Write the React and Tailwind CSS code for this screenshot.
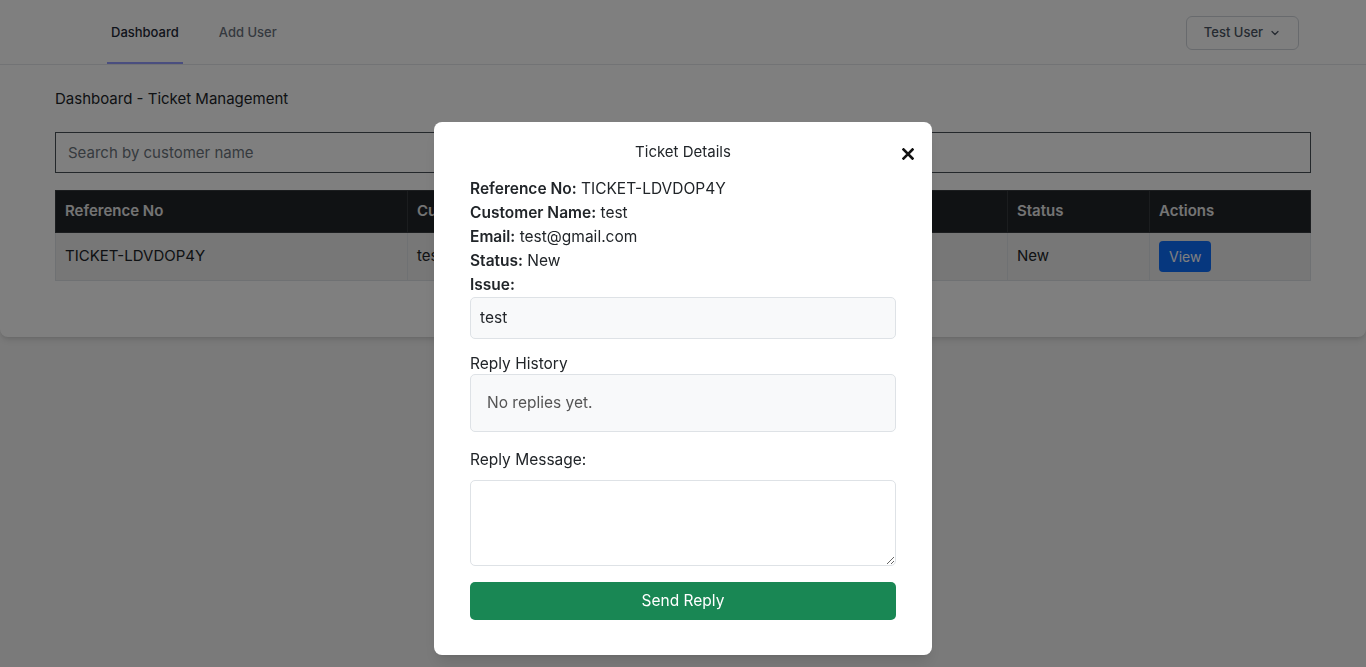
import React from "react";

function Chevron() {
  return (
    <svg width="12" height="12" viewBox="0 0 24 24" fill="none" stroke="currentColor" strokeWidth="2.5" strokeLinecap="round" strokeLinejoin="round">
      <path d="M6 9l6 6 6-6" />
    </svg>
  );
}

export default function App() {
  return (
    <div className="relative min-h-[667px] bg-[#f4f4f4] text-[#212529] font-['Inter',sans-serif]">
      {/* Header */}
      <header className="h-[65px] bg-white border-b border-[#e5e7eb] flex items-stretch justify-between pl-[107px] pr-[67px]">
        <nav className="flex items-stretch gap-[32px] text-[13px] font-medium">
          <a className="flex items-center pt-[4px] px-[4px] border-b-2 border-[#959dff] text-[#1f2937]">Dashboard</a>
          <a className="flex items-center pt-[4px] px-[4px] border-b-2 border-transparent text-[#6b7280]">Add User</a>
        </nav>
        <div className="flex items-center">
          <button className="mt-[1px] h-[34px] w-[113px] flex items-center justify-center gap-[6px] border border-[#d1d5db] rounded-md bg-white text-[13px] font-medium text-[#4b5563]">
            Test User <Chevron />
          </button>
        </div>
      </header>

      {/* Card */}
      <main className="bg-white rounded-b-lg shadow-md px-[55px] pt-[23px] pb-[56px]">
        <h1 className="text-[15px] leading-[22px]">Dashboard - Ticket Management</h1>
        <input
          className="mt-[22px] w-full h-[41px] border border-[#495057] px-[12px] text-[15px] placeholder-[#6c757d] outline-none"
          placeholder="Search by customer name"
        />
        <table className="mt-[17px] w-full border-collapse text-[15px]">
          <thead>
            <tr className="bg-[#212529] text-[#e8e8e8] h-[42px] text-left">
              <th className="font-semibold px-[9px] w-[352px] border border-[#373b3e]">Reference No</th>
              <th className="font-semibold px-[9px] w-[200px] border border-[#373b3e]">Customer Name</th>
              <th className="font-semibold px-[9px] w-[200px] border border-[#373b3e]">Email</th>
              <th className="font-semibold px-[9px] w-[200px] border border-[#373b3e]">Issue</th>
              <th className="font-semibold px-[9px] w-[142px] border border-[#373b3e]">Status</th>
              <th className="font-semibold px-[9px] border border-[#373b3e]">Actions</th>
            </tr>
          </thead>
          <tbody>
            <tr className="bg-[#eeeeee] h-[48px]">
              <td className="px-[9px] border border-[#dee2e6]">TICKET-LDVDOP4Y</td>
              <td className="px-[9px] border border-[#dee2e6]">test</td>
              <td className="px-[9px] border border-[#dee2e6]">test@gmail.com</td>
              <td className="px-[9px] border border-[#dee2e6]">test</td>
              <td className="px-[9px] border border-[#dee2e6]">New</td>
              <td className="px-[9px] border border-[#dee2e6]">
                <button className="h-[31px] px-[10px] rounded-[4px] bg-[#0d6efd] text-white text-[14px]">View</button>
              </td>
            </tr>
          </tbody>
        </table>
      </main>

      {/* Overlay + modal */}
      <div className="fixed inset-0 bg-black/50 flex justify-center items-start pt-[122px]">
        <div className="w-[498px] bg-white rounded-lg px-[36px] pt-[18px] pb-[35px] shadow-lg">
          <div className="relative h-[24px] flex items-center justify-center text-[15px] text-[#212529]">
            Ticket Details
            <button className="absolute right-[-18px] top-[8px] text-[#111]">
              <svg width="12" height="12" viewBox="0 0 12 12" fill="none" stroke="currentColor" strokeWidth="2.6" strokeLinecap="square">
                <path d="M1.5 1.5l9 9M10.5 1.5l-9 9" />
              </svg>
            </button>
          </div>
          <div className="mt-[13px] text-[15.5px] leading-[24px]">
            <p><span className="font-semibold">Reference No:</span> TICKET-LDVDOP4Y</p>
            <p><span className="font-semibold">Customer Name:</span> test</p>
            <p><span className="font-semibold">Email:</span> test@gmail.com</p>
            <p><span className="font-semibold">Status:</span> New</p>
            <p className="font-semibold">Issue:</p>
          </div>
          <div className="h-[42px] flex items-center px-[9px] bg-[#f8f9fa] border border-[#dee2e6] rounded-[5px] text-[15.5px]">
            test
          </div>
          <div className="mt-[15px] text-[15.5px] leading-[20px]">Reply History</div>
          <div className="h-[58px] flex items-center px-[16px] bg-[#f8f9fa] border border-[#dee2e6] rounded-[5px] text-[15.5px] text-[#555]">
            No replies yet.
          </div>
          <div className="mt-[18px] text-[15.5px] leading-[20px]">Reply Message:</div>
          <textarea className="mt-[10px] block w-full h-[86px] border border-[#dee2e6] rounded-[5px] outline-none" />
          <button className="mt-[16px] w-full h-[38px] rounded-[5px] bg-[#198754] text-white text-[15.5px]">
            Send Reply
          </button>
        </div>
      </div>
    </div>
  );
}
